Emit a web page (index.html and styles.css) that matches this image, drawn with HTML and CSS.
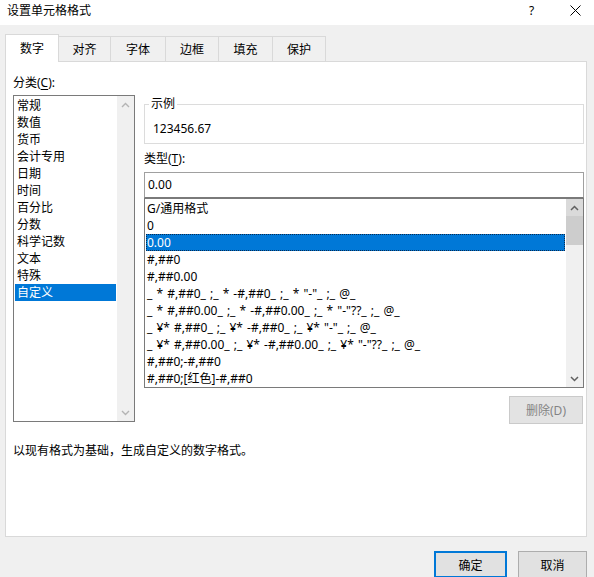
FILE: index.html
```html
<!DOCTYPE html>
<html lang="zh-CN">
<head>
<meta charset="utf-8">
<title>设置单元格格式</title>
<link rel="stylesheet" href="styles.css">
</head>
<body>
<div class="titlebar">
  <span class="title">设置单元格格式</span>
  <span class="help">?</span>
  <span class="close"><svg width="11" height="11" viewBox="0 0 11 11"><path d="M0.5 0.5 L10.5 10.5 M10.5 0.5 L0.5 10.5" stroke="#000" stroke-width="1" fill="none"/></svg></span>
</div>
<div class="main">
  <div class="tabs">
    <div class="tab active t1">数字</div>
    <div class="tab t2">对齐</div>
    <div class="tab t3">字体</div>
    <div class="tab t4">边框</div>
    <div class="tab t5">填充</div>
    <div class="tab t6">保护</div>
  </div>
  <div class="panel">
    <div class="cols">
      <div class="left">
        <div class="label">分类(<u>C</u>):</div>
        <div class="listbox cat">
          <ul class="items">
            <li>常规</li>
            <li>数值</li>
            <li>货币</li>
            <li>会计专用</li>
            <li>日期</li>
            <li>时间</li>
            <li>百分比</li>
            <li>分数</li>
            <li>科学记数</li>
            <li>文本</li>
            <li>特殊</li>
            <li class="sel">自定义</li>
          </ul>
          <div class="scrollbar">
            <div class="sbtn"><svg width="9" height="6" viewBox="0 0 9 6"><path d="M1 5 L4.5 1.5 L8 5" stroke="#b4b4b4" stroke-width="1.4" fill="none"/></svg></div>
            <div class="track"></div>
            <div class="sbtn"><svg width="9" height="6" viewBox="0 0 9 6"><path d="M1 1 L4.5 4.5 L8 1" stroke="#b4b4b4" stroke-width="1.4" fill="none"/></svg></div>
          </div>
        </div>
      </div>
      <div class="right">
        <fieldset class="sample">
          <legend>示例</legend>
          <div class="sample-val">123456.67</div>
        </fieldset>
        <div class="label type-label">类型(<u>T</u>):</div>
        <div class="input">0.00</div>
        <div class="listbox fmt">
          <ul class="items">
            <li>G/通用格式</li>
            <li>0</li>
            <li class="sel focus">0.00</li>
            <li>#,##0</li>
            <li>#,##0.00</li>
            <li>_ * #,##0_ ;_ * -#,##0_ ;_ * "-"_ ;_ @_</li>
            <li>_ * #,##0.00_ ;_ * -#,##0.00_ ;_ * "-"??_ ;_ @_</li>
            <li>_ ¥* #,##0_ ;_ ¥* -#,##0_ ;_ ¥* "-"_ ;_ @_</li>
            <li>_ ¥* #,##0.00_ ;_ ¥* -#,##0.00_ ;_ ¥* "-"??_ ;_ @_</li>
            <li>#,##0;-#,##0</li>
            <li>#,##0;[红色]-#,##0</li>
          </ul>
          <div class="scrollbar">
            <div class="sbtn up-hot"><svg width="9" height="6" viewBox="0 0 9 6"><path d="M1 5 L4.5 1.5 L8 5" stroke="#606060" stroke-width="1.5" fill="none"/></svg></div>
            <div class="thumb"></div>
            <div class="track"></div>
            <div class="sbtn"><svg width="9" height="6" viewBox="0 0 9 6"><path d="M1 1 L4.5 4.5 L8 1" stroke="#606060" stroke-width="1.5" fill="none"/></svg></div>
          </div>
        </div>
        <div class="btn-row">
          <div class="btn disabled del">删除(D)</div>
        </div>
      </div>
    </div>
    <div class="desc">以现有格式为基础，生成自定义的数字格式。</div>
  </div>
  <div class="buttons">
    <div class="btn ok">确定</div>
    <div class="btn cancel">取消</div>
  </div>
</div>
</body>
</html>
```
FILE: styles.css
```css
html, body {
  margin: 0;
  padding: 0;
}
body {
  width: 594px;
  height: 577px;
  overflow: hidden;
  background: #f0f0f0;
  font-family: "Noto Sans", "Noto Sans CJK SC", sans-serif;
  font-size: 12px;
  color: #000;
}
u {
  text-decoration: underline;
  text-underline-offset: 2px;
}

/* title bar */
.titlebar {
  height: 25px;
  background: #fff;
  display: flex;
  align-items: flex-start;
}
.title {
  flex: 1;
  padding: 2px 0 0 7px;
  line-height: 17px;
}
.help {
  padding-top: 2px;
  line-height: 17px;
  width: 10px;
  margin-right: 31px;
}
.close {
  padding-top: 5px;
  margin-right: 13px;
  display: flex;
}

/* main */
.main {
  padding: 9px 7px 0 5px;
}
.tabs {
  display: flex;
  align-items: flex-end;
  height: 28px;
  margin-bottom: -1px;
  position: relative;
  z-index: 1;
}
.tab {
  box-sizing: border-box;
  height: 26px;
  border: 1px solid #d9d9d9;
  border-left: none;
  display: flex;
  align-items: center;
  justify-content: center;
  line-height: 16px;
  padding-top: 1px;
}
.tab.active {
  height: 28px;
  background: #fff;
  border-left: 1px solid #d9d9d9;
  border-bottom: none;
  padding-top: 0;
}
.t1 { width: 54px; }
.t2 { width: 52px; }
.t3 { width: 55px; }
.t4 { width: 53px; }
.t5 { width: 54px; }
.t6 { width: 53px; }

.panel {
  box-sizing: border-box;
  height: 476px;
  background: #fff;
  border: 1px solid #d9d9d9;
  padding: 12px 2px 0 7px;
}
.cols {
  display: flex;
  gap: 9px;
}
.left {
  width: 122px;
}
.right {
  flex: 1;
  display: flex;
  flex-direction: column;
}
.label {
  height: 17px;
  line-height: 17px;
}

/* list boxes */
.listbox {
  box-sizing: border-box;
  border: 1px solid #7a7a7a;
  display: flex;
  background: #fff;
  overflow: hidden;
}
.listbox.cat {
  margin-top: 4px;
  height: 327px;
}
.listbox.fmt {
  height: 190px;
}
.items {
  list-style: none;
  margin: 1px;
  padding: 0;
  flex: 1;
  overflow: hidden;
}
.items li {
  height: 17px;
  line-height: 17px;
  white-space: nowrap;
  box-sizing: border-box;
}
.cat .items li {
  padding-left: 2px;
}
.fmt .items li {
  padding-left: 1px;
  word-spacing: 1px;
}
.items li.sel {
  background: #0078d7;
  color: #fff;
}
.items li.focus {
  outline: 1px dotted #0a2c52;
  outline-offset: -1px;
}
.scrollbar {
  width: 17px;
  background: #f0f0f0;
  display: flex;
  flex-direction: column;
}
.sbtn {
  height: 17px;
  display: flex;
  align-items: center;
  justify-content: center;
  flex: none;
}
.sbtn.up-hot {
  background: #dadada;
}
.thumb {
  height: 29px;
  background: #cdcdcd;
  flex: none;
}
.track {
  flex: 1;
}

/* sample */
.sample {
  margin: 22px 0 0 0;
  padding: 0 0 6px 8px;
  border: 1px solid #dcdcdc;
  min-width: 0;
}
.sample legend {
  padding: 0 2px;
  margin-left: -4px;
  line-height: 16px;
  font-size: 12px;
}
.sample-val {
  padding-top: 9px;
  line-height: 16px;
}
.type-label {
  margin-top: 6px;
}
.input {
  margin-top: 5px;
  box-sizing: border-box;
  height: 26px;
  border: 1px solid #a0a0a0;
  border-bottom-color: #7a7a7a;
  padding-left: 3px;
  line-height: 24px;
}

/* buttons */
.btn-row {
  display: flex;
  justify-content: flex-end;
  margin-top: 8px;
  padding-right: 1px;
}
.btn {
  box-sizing: border-box;
  height: 28px;
  display: flex;
  align-items: center;
  justify-content: center;
  background: #e1e1e1;
  border: 1px solid #adadad;
}
.btn.disabled {
  width: 74px;
  background: #e3e3e3;
  border-color: #cacaca;
  color: #838383;
}
.desc {
  margin-top: 19px;
  line-height: 16px;
}
.buttons {
  display: flex;
  justify-content: flex-end;
  gap: 11px;
  margin-top: 14px;
}
.buttons .btn {
  height: 27px;
}
.btn.ok {
  width: 73px;
  border: 2px solid #0078d7;
}
.btn.cancel {
  width: 69px;
}
```
